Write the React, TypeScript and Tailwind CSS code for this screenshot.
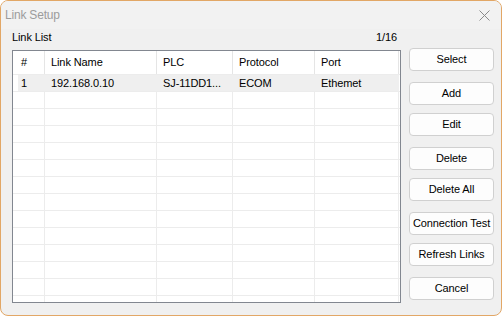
import React from 'react'

const cols = [
  { w: 'w-[32px]', pl: 'pl-[8px]' },
  { w: 'w-[112px]', pl: 'pl-[6px]' },
  { w: 'w-[76px]', pl: 'pl-[6px]' },
  { w: 'w-[82px]', pl: 'pl-[6px]' },
  { w: 'w-[84px]', pl: 'pl-[6px]' },
]

const headers = ['#', 'Link Name', 'PLC', 'Protocol', 'Port']
const rows = [['1', '192.168.0.10', 'SJ-11DD1...', 'ECOM', 'Ethemet']]

const buttons = [
  { label: 'Select', mt: 'mt-[18px]' },
  { label: 'Add', mt: 'mt-[11px]' },
  { label: 'Edit', mt: 'mt-[8px]' },
  { label: 'Delete', mt: 'mt-[11px]' },
  { label: 'Delete All', mt: 'mt-[8px]' },
  { label: 'Connection Test', mt: 'mt-[11px]' },
  { label: 'Refresh Links', mt: 'mt-[8px]' },
  { label: 'Cancel', mt: 'mt-[11px]' },
]

export default function App() {
  const emptyRows = 12

  return (
    <div className="w-[502px] h-[316px] bg-[#f0f0f0] border border-[#e2a766] rounded-[8px] overflow-hidden font-['Liberation_Sans',Arial,sans-serif] text-[11px] text-black">
      {/* title bar */}
      <div className="h-[28px] flex items-center justify-between pl-[4px] pr-[11px] bg-[#f2f2f2]">
        <span className="text-[12px] text-[#9c9c9c] tracking-[-0.2px]">Link Setup</span>
        <svg width="11" height="11" viewBox="0 0 11 11">
          <path d="M0.5 0.5 L10.5 10.5 M10.5 0.5 L0.5 10.5" stroke="#8a8a8a" strokeWidth="1" />
        </svg>
      </div>

      <div className="flex pl-[11px] pt-[1px]">
        {/* list */}
        <div className="w-[389px] flex flex-col">
          <div className="h-[15px] leading-[15px] flex justify-between pr-[4px] mb-[5px] tracking-[-0.1px]">
            <span>Link List</span>
            <span>1/16</span>
          </div>
          <div className="h-[253px] border border-[#828790] bg-white overflow-hidden tracking-[-0.1px]">
            <div className="flex h-[24px] border-b border-[#ececec]">
              {headers.map((h, i) => (
                <div key={i} className={`${cols[i].w} ${cols[i].pl} h-full flex items-center border-r border-[#e5e5e5]`}>
                  {h}
                </div>
              ))}
            </div>
            {rows.map((r, ri) => (
              <div key={ri} className="flex h-[17px] border-b border-[#ececec]">
                {r.map((c, i) => (
                  <div
                    key={i}
                    className={`${cols[i].w} ${cols[i].pl} h-full flex items-center whitespace-nowrap ${i === 0 ? 'bg-[linear-gradient(to_right,#ffffff_5px,#efefef_5px)]' : 'bg-[#efefef]'}`}
                  >
                    {c}
                  </div>
                ))}
              </div>
            ))}
            {Array.from({ length: emptyRows + 1 }).map((_, ri) => (
              <div key={ri} className={`flex ${ri < emptyRows ? 'h-[17px] border-b' : 'h-[6px]'} border-[#ececec]`}>
                {cols.map((c, i) => (
                  <div key={i} className={`${c.w} h-full border-r border-[#ececec]`} />
                ))}
              </div>
            ))}
          </div>
        </div>

        {/* buttons */}
        <div className="ml-[8px] flex flex-col tracking-[-0.1px]">
          {buttons.map((b) => (
            <button
              key={b.label}
              className={`${b.mt} w-[85px] h-[23px] bg-[#fdfdfd] border border-[#d0d0d0] rounded-[4px] flex items-center justify-center whitespace-nowrap`}
            >
              {b.label}
            </button>
          ))}
        </div>
      </div>
    </div>
  )
}
